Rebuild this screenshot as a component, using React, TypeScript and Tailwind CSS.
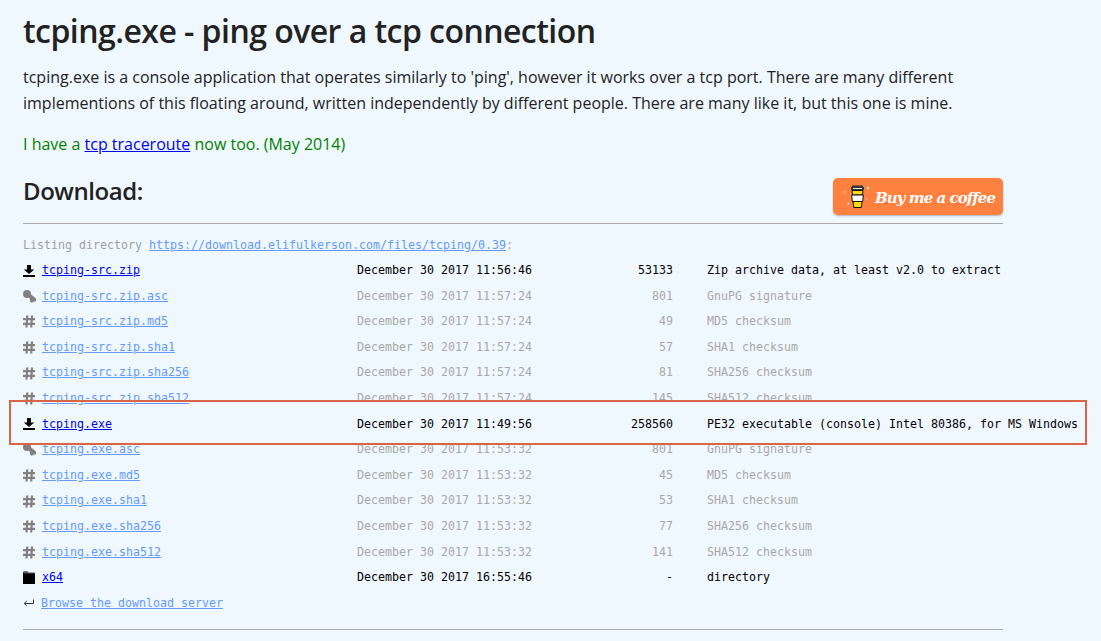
import React from "react";

const DownloadIcon = ({ c }: { c: string }) => (
  <svg width="12" height="12" viewBox="0 0 12 12" fill={c}>
    <path d="M4 0h4v4.5h3.2L6 9 0.8 4.5h3.2z" />
    <rect x="0" y="10" width="12" height="2" />
  </svg>
);
const KeyIcon = () => (
  <svg width="13" height="13" viewBox="0 0 13 13" fill="#808080">
    <circle cx="4" cy="4" r="4" />
    <path d="M5 5.5L7 3.5L13 8.5V11.5L11.5 11V12.5L10 11.5L9 13L7 11.5V9.5Z" />
  </svg>
);
const HashIcon = () => (
  <svg width="12" height="13" viewBox="0 0 12 13" fill="none" stroke="#808080" strokeWidth="2.2">
    <path d="M4.3 0.5L3.5 12.5M9 0.5L8.2 12.5M0 4.2H12M0 8.8H12" />
  </svg>
);
const FolderIcon = () => (
  <svg width="12" height="13" viewBox="0 0 12 13" fill="#000">
    <path d="M0 1.5Q0 0.5 1 0.5H4.5L5.5 1.5H11Q12 1.5 12 2.5V13H0Z" />
    <rect x="0.5" y="1.6" width="11" height="0.6" fill="#cfd6dc" />
  </svg>
);
const ReturnIcon = () => (
  <svg width="11" height="9" viewBox="0 0 11 9" fill="none" stroke="#333" strokeWidth="1">
    <path d="M10.5 0.5V4.5H1.5M3.8 2L1.2 4.5L3.8 7" />
  </svg>
);
const CupIcon = () => (
  <svg width="26" height="24" viewBox="0 0 26 24">
    <rect x="9" y="0.5" width="11" height="1.5" fill="#333" />
    <rect x="8" y="2" width="13" height="3" fill="#333" />
    <rect x="10" y="3" width="9" height="1" fill="#eee" />
    <path d="M9 5.5h11l-.5 4.5h-10z" fill="#FFDD00" stroke="#111" strokeWidth="1" />
    <path d="M8.7 10h11.6l-.6 6.5H9.3z" fill="#fff" stroke="#111" strokeWidth="1" />
    <path d="M10 16.5h9l-.7 6H10.7z" fill="#FFDD00" stroke="#111" strokeWidth="1" />
    <rect x="24" y="2" width="2" height="2" fill="#fff" />
    <circle cx="1.5" cy="7" r="1.5" fill="#ffa677" />
    <rect x="4.5" y="18" width="1.5" height="1.5" fill="#fff" />
    <rect x="23" y="13" width="1.5" height="1.5" fill="#ffa677" />
  </svg>
);

type Row = { k: string; n: string; d: string; s: string; t: string; on?: boolean };
const rows: Row[] = [
  { k: "d", n: "tcping-src.zip", d: "December 30 2017 11:56:46", s: "53133", t: "Zip archive data, at least v2.0 to extract", on: true },
  { k: "k", n: "tcping-src.zip.asc", d: "December 30 2017 11:57:24", s: "801", t: "GnuPG signature" },
  { k: "h", n: "tcping-src.zip.md5", d: "December 30 2017 11:57:24", s: "49", t: "MD5 checksum" },
  { k: "h", n: "tcping-src.zip.sha1", d: "December 30 2017 11:57:24", s: "57", t: "SHA1 checksum" },
  { k: "h", n: "tcping-src.zip.sha256", d: "December 30 2017 11:57:24", s: "81", t: "SHA256 checksum" },
  { k: "h", n: "tcping-src.zip.sha512", d: "December 30 2017 11:57:24", s: "145", t: "SHA512 checksum" },
  { k: "d", n: "tcping.exe", d: "December 30 2017 11:49:56", s: "258560", t: "PE32 executable (console) Intel 80386, for MS Windows", on: true },
  { k: "k", n: "tcping.exe.asc", d: "December 30 2017 11:53:32", s: "801", t: "GnuPG signature" },
  { k: "h", n: "tcping.exe.md5", d: "December 30 2017 11:53:32", s: "45", t: "MD5 checksum" },
  { k: "h", n: "tcping.exe.sha1", d: "December 30 2017 11:53:32", s: "53", t: "SHA1 checksum" },
  { k: "h", n: "tcping.exe.sha256", d: "December 30 2017 11:53:32", s: "77", t: "SHA256 checksum" },
  { k: "h", n: "tcping.exe.sha512", d: "December 30 2017 11:53:32", s: "141", t: "SHA512 checksum" },
  { k: "f", n: "x64", d: "December 30 2017 16:55:46", s: "-", t: "directory", on: true },
];

export default function App() {
  return (
    <div className="relative h-[641px] w-[1101px] overflow-hidden bg-[#f0f8ff] font-['Open_Sans',sans-serif] text-[16px] text-[#222]">
      <div className="ml-[23px] w-[980px]">
        <h1 className="pt-[7px] text-[32px] font-semibold leading-[48px] tracking-[-0.54px] text-[#222]">tcping.exe - ping over a tcp connection</h1>
        <p className="mt-[9px] leading-[26px]">
          tcping.exe is a console application that operates similarly to 'ping', however it works over a tcp port. There are many different implementions of this floating around, written independently by different people. There are many like it, but this one is mine.
        </p>
        <p className="mt-[15px] leading-[26px] text-[#008000]">
          I have a <a className="text-[#0000ee] underline">tcp traceroute</a> now too. (May 2014)
        </p>
        <div className="mt-[14px] flex h-[53px] items-start justify-between border-b border-[#aaa]">
          <h2 className="pt-[2px] text-[24px] font-semibold leading-[36px] tracking-[-0.45px]">Download:</h2>
          <div className="mt-[7px] flex h-[37px] w-[170px] items-center rounded-[5px] bg-[#ff813f] pl-[10px] shadow-[0_1px_2px_rgba(0,0,0,0.3)]">
            <CupIcon />
            <span className="ml-[6px] mt-[3px] whitespace-nowrap font-['DejaVu_Serif',serif] text-[15px] font-bold italic leading-none tracking-[-0.95px] text-white">Buy me a coffee</span>
          </div>
        </div>
        <div className="font-['DejaVu_Sans_Mono',monospace] text-[11.63px]">
          <div className="mt-[11px] h-[20px] leading-[20px] text-[#a0a0a0]">
            Listing directory <a className="text-[#6699ff] underline">https://download.elifulkerson.com/files/tcping/0.39</a>:
          </div>
          <div className="mt-[3px]">
            {rows.map((r) => (
              <div key={r.n} className={`flex h-[25.6px] items-center whitespace-nowrap ${r.on ? "text-black" : "text-[#a8a8a8]"}`}>
                <span className="flex w-[19px] shrink-0 items-center">
                  {r.k === "d" && <DownloadIcon c="#000" />}
                  {r.k === "k" && <KeyIcon />}
                  {r.k === "h" && <HashIcon />}
                  {r.k === "f" && <FolderIcon />}
                </span>
                <a className={`w-[315px] shrink-0 ${r.on ? "text-[#0000ee]" : "text-[#6699ff]"}`}><span className="underline">{r.n}</span></a>
                <span className="w-[176px] shrink-0">{r.d}</span>
                <span className="w-[140px] shrink-0 text-right">{r.s}</span>
                <span className="ml-[34px] shrink-0">{r.t}</span>
              </div>
            ))}
            <div className="flex h-[25.6px] items-center whitespace-nowrap">
              <span className="flex w-[18px] shrink-0 items-center"><ReturnIcon /></span>
              <a className="text-[#6699ff] underline">Browse the download server</a>
            </div>
          </div>
          <div className="mt-[13px] border-b border-[#aaa]" />
        </div>
      </div>
      <div className="absolute left-[9px] top-[400px] h-[45px] w-[1078px] border-2 border-[#db6447]" />
    </div>
  );
}
